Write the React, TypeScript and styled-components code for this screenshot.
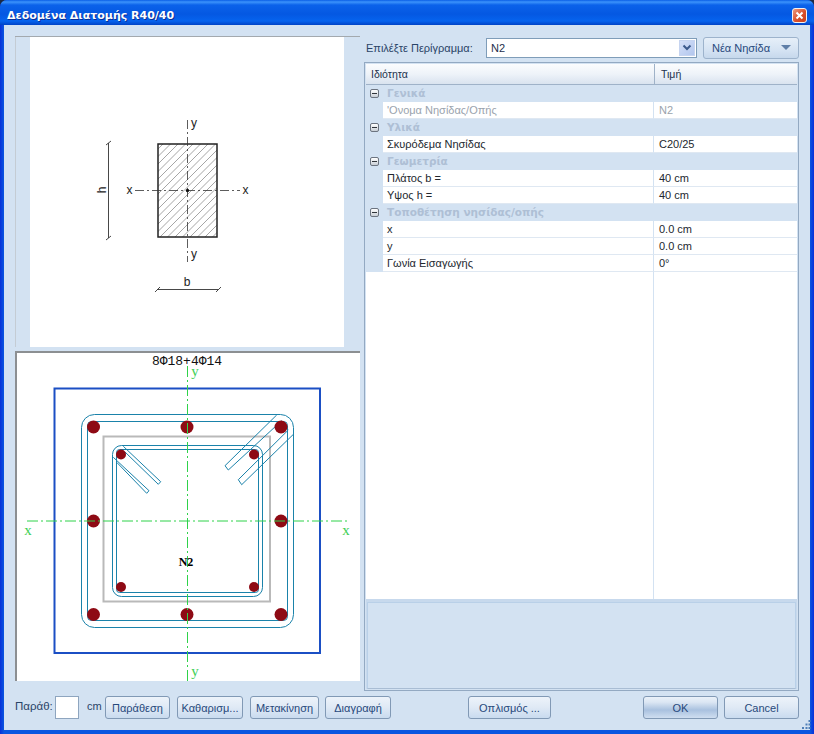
import React from "react";
import styled, { createGlobalStyle } from "styled-components";

const GlobalStyle = createGlobalStyle`
  html, body {
    margin: 0;
    padding: 0;
    background: #1c2a44;
  }
  * {
    box-sizing: border-box;
  }
`;

const Window = styled.div`
  width: 814px;
  height: 734px;
  display: flex;
  flex-direction: column;
  position: relative;
  overflow: hidden;
  border-radius: 7px 7px 0 0;
  background: linear-gradient(90deg, #0831d9 0, #0a56e0 4px, #0a56e0 810px, #0831d9 814px);
  font-family: "Liberation Sans", Arial, sans-serif;
  font-size: 11px;
  color: #1d2f4d;
`;

const TitleBar = styled.div`
  height: 25px;
  flex: none;
  display: flex;
  align-items: center;
  justify-content: space-between;
  padding: 5px 7px 0 7px;
  background: linear-gradient(180deg, #0a5ee6 0, #3c93fb 2px, #0b62ea 5px, #0558e2 14px, #0663ee 21px, #0043c6 25px);
`;

const Title = styled.span`
  font-family: "DejaVu Sans", sans-serif;
  font-size: 11px;
  font-weight: 700;
  color: #ffffff;
  text-shadow: 1px 1px 0 #0a2f96;
`;

const CloseButton = styled.div`
  width: 15px;
  height: 15px;
  border: 1px solid #f3f3f3;
  border-radius: 3px;
  display: flex;
  align-items: center;
  justify-content: center;
  background: linear-gradient(135deg, #ec9a80, #d9502c 55%, #c8401c);
`;

const Client = styled.div`
  flex: 1;
  margin: 0 4px 4px;
  padding: 11px 11px 0;
  display: flex;
  flex-direction: column;
  background: #d3e2f2;
`;

const Main = styled.div`
  height: 655px;
  display: flex;
  gap: 4px;
`;

const LeftColumn = styled.div`
  width: 345px;
  display: flex;
  flex-direction: column;
  gap: 4px;
`;

const SectionPanel = styled.div`
  height: 311px;
  flex: none;
  padding: 0 16px 0 15px;
  border-top: 1px solid #a3a9ae;
  box-shadow: inset 1px 0 0 #c4ccd4;
`;

const SectionCanvas = styled.div`
  height: 100%;
  background: #ffffff;
  svg {
    display: block;
  }
`;

const RebarPanel = styled.div`
  height: 330px;
  flex: none;
  background: #ffffff;
  border-top: 2px solid #8c8f92;
  border-left: 2px solid #8c8f92;
  svg {
    display: block;
  }
`;

const RightColumn = styled.div`
  flex: 1;
  display: flex;
  flex-direction: column;
  min-width: 0;
`;

const SelectorRow = styled.div`
  height: 21px;
  margin-top: 1px;
  flex: none;
  display: flex;
  align-items: center;
  padding-left: 2px;
`;

const SelectorLabel = styled.span`
  width: 120px;
  color: #2a4467;
  font-size: 11px;
  white-space: nowrap;
`;

const Select = styled.div`
  width: 211px;
  height: 20px;
  display: flex;
  align-items: center;
  justify-content: space-between;
  padding: 1px 1px 1px 4px;
  background: #ffffff;
  border: 1px solid #7f9db9;
`;

const SelectArrow = styled.div`
  width: 16px;
  height: 16px;
  display: flex;
  align-items: center;
  justify-content: center;
  background: linear-gradient(135deg, #d5e0f8, #b2c6ee);
  border: 1px solid #c6d4f0;
`;

const DropButton = styled.div`
  width: 96px;
  height: 22px;
  margin-left: 6px;
  display: flex;
  align-items: center;
  justify-content: space-between;
  padding: 0 7px 0 8px;
  border: 1px solid #9db3cc;
  border-radius: 3px;
  color: #27497c;
  background: linear-gradient(180deg, #e6eff9, #d5e3f3 60%, #c6d8ec);
`;

const DropCaret = styled.span`
  width: 0;
  height: 0;
  border-left: 5.5px solid transparent;
  border-right: 5.5px solid transparent;
  border-top: 5px solid #5f7fa8;
`;

const PropertyGrid = styled.div`
  flex: 1;
  margin-top: 4px;
  display: flex;
  flex-direction: column;
  padding: 1px;
  border: 1px solid #93a9c2;
  min-height: 0;
`;

const HeaderRow = styled.div`
  height: 21px;
  flex: none;
  display: grid;
  grid-template-columns: 288px 1fr;
  align-items: center;
  background: linear-gradient(180deg, #fbfcfe, #eef3f9 50%, #d9e3ef);
  border-bottom: 1px solid #9fb2c8;
`;

const HeaderCell = styled.div<{ $divider?: boolean }>`
  height: 100%;
  display: flex;
  align-items: center;
  padding-left: ${(p) => (p.$divider ? "6px" : "5px")};
  border-left: ${(p) => (p.$divider ? "1px solid #9fb2c8" : "none")};
  color: #22324c;
  font-size: 10.5px;
`;

const CategoryRow = styled.div`
  height: 17px;
  flex: none;
  display: flex;
  align-items: center;
  padding-left: 4px;
  background: #d3e2f2;
`;

const ExpandBox = styled.span`
  width: 9px;
  height: 9px;
  display: flex;
  align-items: center;
  justify-content: center;
  border: 1px solid #6c7480;
  border-radius: 2px;
  background: linear-gradient(180deg, #ffffff, #c9cfd6);

  &::before {
    content: "";
    width: 5px;
    height: 1px;
    background: #30343a;
  }
`;

const CategoryName = styled.span`
  margin: -2px 0 0 8px;
  font-family: "DejaVu Sans", sans-serif;
  font-size: 10.5px;
  font-weight: 700;
  color: #aebfd5;
`;

const DataRow = styled.div`
  height: 17px;
  flex: none;
  display: grid;
  grid-template-columns: 17px 270px 1fr;
  background: #d3e2f2;
`;

const NameCell = styled.div<{ $disabled?: boolean }>`
  display: flex;
  align-items: center;
  padding-left: 4px;
  background: #ffffff;
  border-bottom: 1px solid #dfe8f2;
  color: ${(p) => (p.$disabled ? "#9aa3ad" : "#22272e")};
`;

const ValueCell = styled(NameCell)`
  padding-left: 5px;
  border-left: 1px solid #d3e2f2;
`;

const BlankRows = styled.div`
  flex: 1;
  display: grid;
  grid-template-columns: 287px 1fr;
  background: #ffffff;
`;

const BlankValue = styled.div`
  border-left: 1px solid #d3e2f2;
`;

const DescriptionBox = styled.div`
  height: 90px;
  flex: none;
  padding-top: 3px;
  background: #c7d9ed;
`;

const DescriptionInner = styled.div`
  height: 100%;
  margin: 0 1px;
  background: #d3e2f2;
  border: 1px solid #b9d0e8;
  border-bottom-color: #a9bdd4;
`;

const Footer = styled.div`
  height: 23px;
  margin-top: 5px;
  flex: none;
  display: flex;
  align-items: center;
`;

const OffsetLabel = styled.span`
  width: 40px;
  margin-top: -3px;
  font-size: 11.5px;
  color: #2a4467;
`;

const OffsetInput = styled.div`
  width: 24px;
  height: 23px;
  background: #ffffff;
  border: 1px solid #8ea5bf;
`;

const UnitLabel = styled.span`
  width: 26px;
  margin-top: -3px;
  padding-left: 8px;
  color: #2a4467;
`;

const Button = styled.button<{ $w: number; $gap?: number; $primary?: boolean }>`
  width: ${(p) => p.$w}px;
  height: 23px;
  margin: 0 0 0 ${(p) => p.$gap ?? 0}px;
  padding: 0;
  font-family: inherit;
  font-size: 11px;
  color: #27497c;
  white-space: nowrap;
  overflow: hidden;
  border: 1px solid #8199b5;
  border-radius: 3px;
  background: ${(p) =>
    p.$primary
      ? "linear-gradient(180deg, #eaf1f9 0, #dbe6f3 25%, #a9c1df 62%, #cfdef0 100%)"
      : "linear-gradient(180deg, #edf3fa 0, #dfe9f5 50%, #c9dbef 100%)"};
`;

const Grip = styled.svg`
  position: absolute;
  right: 3px;
  bottom: 5px;
`;

const STEEL = "#1a82aa";

const hatch: string[] = [];
for (let c = 163; c < 217 + 93; c += 7.5) hatch.push(`M${c - 93} 237L${c} 144`);

const SectionDiagram = () => (
  <svg width="314" height="310" viewBox="30 37 314 310">
    <defs>
      <clipPath id="sec">
        <rect x="158" y="144" width="59" height="93" />
      </clipPath>
    </defs>
    <g clipPath="url(#sec)" stroke="#808080" strokeWidth="0.7">
      {hatch.map((d) => (
        <path key={d} d={d} />
      ))}
    </g>
    <rect x="158" y="144" width="59" height="93" fill="none" stroke="#222" strokeWidth="1.5" />
    <path d="M187.5 120V262M135 190.5H240" stroke="#333" strokeWidth="0.8" strokeDasharray="9 3 2 3" fill="none" />
    <circle cx="187.5" cy="190.5" r="1.7" fill="#111" />
    <g fontFamily="'Liberation Sans', Arial, sans-serif" fontSize="12" fill="#222" textAnchor="middle">
      <text x="194" y="127">y</text>
      <text x="194" y="258">y</text>
      <text x="129.5" y="194">x</text>
      <text x="245.5" y="194">x</text>
      <text x="187" y="286">b</text>
      <text x="106" y="190" transform="rotate(-90 106 190)">h</text>
    </g>
    <path d="M108.5 143V238M106 145L111 141M106 240L111 236M157 289.5H218M155 292L160 287M216 292L221 287" stroke="#333" strokeWidth="0.9" fill="none" />
  </svg>
);

const bigBars: [number, number][] = [
  [93.5, 428], [187, 428], [281, 428],
  [93.5, 522], [281, 522],
  [93.5, 615.5], [187, 615.5], [281, 615.5],
];
const smallBars: [number, number][] = [
  [121, 455.5], [254, 455.5], [121, 588], [254, 588],
];

const RebarDiagram = () => (
  <svg width="343" height="328" viewBox="17 354 343 328">
    <rect x="54.5" y="389.5" width="265.5" height="264.5" fill="none" stroke="#1b4fc4" strokeWidth="2" />
    <rect x="103.5" y="437.5" width="166.5" height="165" fill="none" stroke="#b9b9b9" strokeWidth="2" />
    <g fill="none" stroke={STEEL} strokeWidth="1">
      <rect x="81.5" y="415.5" width="212" height="213" rx="13" />
      <rect x="87.5" y="422.5" width="200" height="199" rx="4" />
      <rect x="112.5" y="446.5" width="150" height="151" rx="9" />
      <rect x="116.5" y="450.5" width="142" height="143" rx="3" />
      <path d="M123.3 447.3L160.7 482.7L158.3 485.3L125 453" />
      <path d="M113.3 458.3L149 491.7L146.7 494.3L116.7 463.3" />
      <path d="M276.7 416L225 466.7L228.3 471L281.7 421.7" />
      <path d="M288.3 431L238.3 480.7L241.7 485.7L293 435.7" />
    </g>
    {bigBars.map(([x, y]) => (
      <circle key={`${x}-${y}`} cx={x} cy={y} r="6.5" fill="#8e0a14" />
    ))}
    {smallBars.map(([x, y]) => (
      <circle key={`${x}-${y}`} cx={x} cy={y} r="5" fill="#8e0a14" />
    ))}
    <path d="M187.5 367V683M27 522H348" stroke="#2fd24a" strokeWidth="1" strokeDasharray="11 3 2 3" fill="none" />
    <g fontFamily="'Liberation Serif', serif" fontSize="15" fill="#3ecf55" textAnchor="middle">
      <text x="195" y="377">y</text>
      <text x="195" y="677">y</text>
      <text x="28" y="536">x</text>
      <text x="346" y="536">x</text>
    </g>
    <text x="187" y="366" fontFamily="'Liberation Mono', monospace" fontSize="13" fill="#111" textAnchor="middle">8Φ18+4Φ14</text>
    <text x="186" y="567" fontFamily="'Liberation Serif', serif" fontSize="12" fontWeight="700" fill="#000" textAnchor="middle">N2</text>
  </svg>
);

type Item = { name: string; value: string; disabled?: boolean };
type Group = { title: string; items: Item[] };

const groups: Group[] = [
  { title: "Γενικά", items: [{ name: "'Ονομα Νησίδας/Οπής", value: "N2", disabled: true }] },
  { title: "Υλικά", items: [{ name: "Σκυρόδεμα Νησίδας", value: "C20/25" }] },
  {
    title: "Γεωμετρία",
    items: [
      { name: "Πλάτος b =", value: "40 cm" },
      { name: "Υψος h =", value: "40 cm" },
    ],
  },
  {
    title: "Τοποθέτηση νησίδας/οπής",
    items: [
      { name: "x", value: "0.0 cm" },
      { name: "y", value: "0.0 cm" },
      { name: "Γωνία Εισαγωγής", value: "0°" },
    ],
  },
];

const App = () => {
  return (
    <Window>
      <GlobalStyle />
      <TitleBar>
        <Title>Δεδομένα Διατομής R40/40</Title>
        <CloseButton>
          <svg width="9" height="9" viewBox="0 0 9 9">
            <path d="M1.5 1.5L7.5 7.5M7.5 1.5L1.5 7.5" stroke="#fff" strokeWidth="2" />
          </svg>
        </CloseButton>
      </TitleBar>
      <Client>
        <Main>
          <LeftColumn>
            <SectionPanel>
              <SectionCanvas>
                <SectionDiagram />
              </SectionCanvas>
            </SectionPanel>
            <RebarPanel>
              <RebarDiagram />
            </RebarPanel>
          </LeftColumn>
          <RightColumn>
            <SelectorRow>
              <SelectorLabel>Επιλέξτε Περίγραμμα:</SelectorLabel>
              <Select>
                N2
                <SelectArrow>
                  <svg width="10" height="8" viewBox="0 0 10 8">
                    <path d="M1.5 1.5L5 5L8.5 1.5" stroke="#3c5a8c" strokeWidth="2" fill="none" />
                  </svg>
                </SelectArrow>
              </Select>
              <DropButton>
                Νέα Νησίδα
                <DropCaret />
              </DropButton>
            </SelectorRow>
            <PropertyGrid>
              <HeaderRow>
                <HeaderCell>Ιδιότητα</HeaderCell>
                <HeaderCell $divider>Τιμή</HeaderCell>
              </HeaderRow>
              {groups.map((g) => (
                <React.Fragment key={g.title}>
                  <CategoryRow>
                    <ExpandBox />
                    <CategoryName>{g.title}</CategoryName>
                  </CategoryRow>
                  {g.items.map((it) => (
                    <DataRow key={it.name}>
                      <span />
                      <NameCell $disabled={it.disabled}>{it.name}</NameCell>
                      <ValueCell $disabled={it.disabled}>{it.value}</ValueCell>
                    </DataRow>
                  ))}
                </React.Fragment>
              ))}
              <BlankRows>
                <span />
                <BlankValue />
              </BlankRows>
              <DescriptionBox>
                <DescriptionInner />
              </DescriptionBox>
            </PropertyGrid>
          </RightColumn>
        </Main>
        <Footer>
          <OffsetLabel>Παράθ:</OffsetLabel>
          <OffsetInput />
          <UnitLabel>cm</UnitLabel>
          <Button $w={65}>Παράθεση</Button>
          <Button $w={66} $gap={7}>Καθαρισμ...</Button>
          <Button $w={69} $gap={7}>Μετακίνηση</Button>
          <Button $w={66} $gap={6}>Διαγραφή</Button>
          <Button $w={83} $gap={77}>Οπλισμός ...</Button>
          <Button $w={75} $gap={92} $primary>OK</Button>
          <Button $w={75} $gap={6}>Cancel</Button>
        </Footer>
      </Client>
      <Grip width="9" height="9" viewBox="0 0 9 9" fill="#4f7fb8">
        <rect x="6.5" y="0" width="2" height="2" />
        <rect x="3.5" y="3.5" width="2" height="2" />
        <rect x="6.5" y="3.5" width="2" height="2" />
        <rect x="0" y="7" width="2" height="2" />
        <rect x="3.5" y="7" width="2" height="2" />
        <rect x="6.5" y="7" width="2" height="2" />
      </Grip>
    </Window>
  );
};

export default App;
